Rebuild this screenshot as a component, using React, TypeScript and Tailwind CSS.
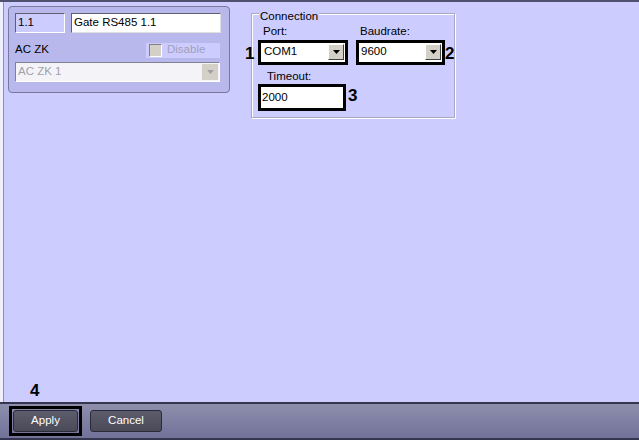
import React from "react";

const font = { fontFamily: '"Liberation Sans", Arial, sans-serif' };

function Arrow({ disabled }: { disabled?: boolean }) {
  return (
    <div
      className={
        "w-[16px] h-[16px] flex items-center justify-center border " +
        (disabled
          ? "bg-[#d4d0c8] border-[#d4d0c8]"
          : "bg-[#d4d0c8] border-t-white border-l-white border-r-[#404040] border-b-[#404040]")
      }
    >
      <svg width="7" height="4" viewBox="0 0 7 4">
        <path d="M0 0H7L3.5 4Z" fill={disabled ? "#a0a0a0" : "#000"} />
      </svg>
    </div>
  );
}

export default function App() {
  return (
    <div
      className="relative w-[639px] h-[440px] bg-[#ccccfe] flex flex-col text-[11.5px] text-black overflow-hidden"
      style={font}
    >
      <div className="h-[2px] bg-[#505070]" />
      <div className="flex-1 flex border-l-[3px] border-l-[#f0f0ff]">
        <div className="w-px bg-[#9090a8]" />
        <div className="flex-1 flex items-start pl-[4px] pt-[4px]">
          {/* left panel */}
          <div className="w-[222px] h-[87px] rounded-[4px] border border-[#7878a0] bg-[#b8b8ec] px-[6px] pt-[6px] flex flex-col">
            <div className="flex gap-[6px]">
              <div className="w-[50px] h-[20px] bg-[#ccccfe] border border-t-[#606070] border-l-[#606070] border-b-white border-r-white flex items-center px-[2px] leading-none">
                1.1
              </div>
              <div className="w-[150px] h-[20px] bg-white border border-t-[#606070] border-l-[#606070] border-b-[#e0e0e0] border-r-[#e0e0e0] flex items-center px-[2px] leading-none">
                Gate RS485 1.1
              </div>
            </div>
            <div className="flex items-center justify-between mt-[9px] h-[16px]">
              <span className="leading-none">AC ZK</span>
              <div className="w-[74px] h-[15px] bg-[#ccccfe] flex items-center gap-[5px] pl-[3px] mr-[3px]">
                <div className="w-[13px] h-[13px] bg-[#d4d0c8] border border-t-[#808080] border-l-[#808080] border-b-white border-r-white" />
                <span className="text-[#a0a0b8] leading-none">Disable</span>
              </div>
            </div>
            <div className="mt-[4px] w-[205px] h-[20px] bg-[#f4f4f8] border border-t-[#808090] border-l-[#808090] border-b-white border-r-white flex items-center justify-between pl-[2px] pr-[1px]">
              <span className="text-[#a0a0a8] leading-none">AC ZK 1</span>
              <Arrow disabled />
            </div>
          </div>

          {/* connection group */}
          <div className="relative ml-[21px] mt-[7px] w-[204px] h-[105px] border border-[#a8a8c0] shadow-[inset_1px_1px_0_#ffffff,1px_1px_0_#ffffff]">
            <span className="absolute left-[7px] -top-[3px] bg-[#ccccfe] px-[1px] leading-none">Connection</span>
            <div className="flex gap-[8px] pl-[6px] pt-[12px]">
              <div className="flex flex-col">
                <span className="pl-[5px] leading-none mb-[2px]">Port:</span>
                <div className="w-[90px] h-[25px] border-[3px] border-black bg-white flex items-center justify-between pl-[3px] pr-[1px]">
                  <span className="leading-none">COM1</span>
                  <Arrow />
                </div>
              </div>
              <div className="flex flex-col">
                <span className="pl-[4px] leading-none mb-[2px]">Baudrate:</span>
                <div className="w-[89px] h-[25px] border-[3px] border-black bg-white flex items-center justify-between pl-[2px] pr-[1px]">
                  <span className="leading-none">9600</span>
                  <Arrow />
                </div>
              </div>
            </div>
            <div className="flex flex-col pl-[6px] mt-[6px]">
              <span className="pl-[9px] leading-none mb-[2px]">Timeout:</span>
              <div className="w-[88px] h-[27px] border-[3px] border-black bg-white flex items-center pl-[1px]">
                <span className="leading-none">2000</span>
              </div>
            </div>
            <span className="absolute left-[-7px] top-[31px] text-[17px] font-bold leading-none">1</span>
            <span className="absolute left-[193px] top-[31px] text-[17px] font-bold leading-none">2</span>
            <span className="absolute left-[96px] top-[73px] text-[17px] font-bold leading-none">3</span>
          </div>
        </div>
      </div>
      <span className="absolute left-[30px] top-[382px] text-[17px] font-bold leading-none">4</span>
      <div className="h-[38px] border-t-2 border-t-[#353550] border-b-2 border-b-[#353550] bg-gradient-to-b from-[#8e8eac] to-[#72729a] flex items-center pl-[9px] gap-[8px]">
        <div className="border-[3px] border-black p-px">
          <div className="w-[65px] h-[22px] rounded-[3px] border border-[#2a2a3a] bg-gradient-to-b from-[#5c5c6c] to-[#4a4a58] text-white flex items-center justify-center">
            Apply
          </div>
        </div>
        <div className="w-[72px] h-[22px] rounded-[3px] border border-[#2a2a3a] bg-gradient-to-b from-[#5c5c6c] to-[#4a4a58] text-white flex items-center justify-center">
          Cancel
        </div>
      </div>
    </div>
  );
}
